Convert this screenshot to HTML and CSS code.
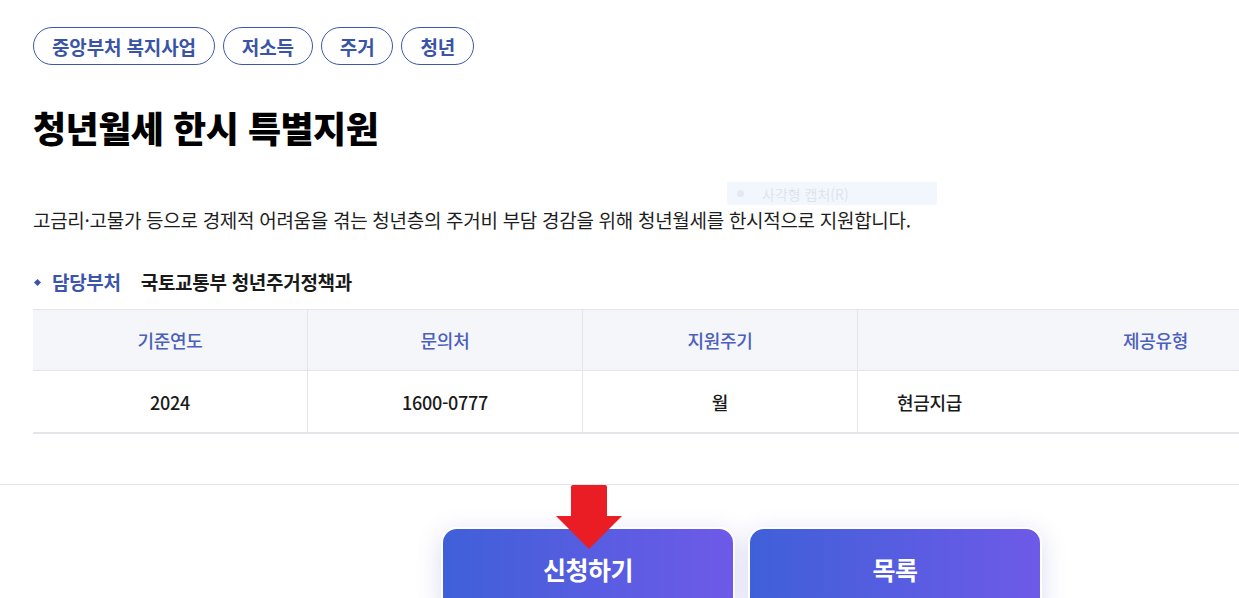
FILE: index.html
```html
<!DOCTYPE html>
<html lang="ko">
<head>
<meta charset="utf-8">
<title>청년월세 한시 특별지원</title>
<link rel="stylesheet" href="styles.css">
</head>
<body>
<div class="page">
  <div class="content">
    <ul class="tags">
      <li class="tag">중앙부처 복지사업</li>
      <li class="tag">저소득</li>
      <li class="tag">주거</li>
      <li class="tag">청년</li>
    </ul>
    <h1 class="title">청년월세 한시 특별지원</h1>
    <p class="desc">고금리·고물가 등으로 경제적 어려움을 겪는 청년층의 주거비 부담 경감을 위해 청년월세를 한시적으로 지원합니다.</p>
    <div class="dept">
      <span class="dept-label">담당부처</span>
      <span class="dept-value">국토교통부 청년주거정책과</span>
    </div>
    <div class="info-table">
      <div class="th">기준연도</div>
      <div class="th">문의처</div>
      <div class="th">지원주기</div>
      <div class="th">제공유형</div>
      <div class="td">2024</div>
      <div class="td">1600-0777</div>
      <div class="td">월</div>
      <div class="td td-left">현금지급</div>
    </div>
  </div>
  <div class="divider"></div>
  <div class="actions">
    <div class="btn-wrap">
      <button class="btn">신청하기</button>
      <div class="arrow">
        <div class="arrow-shaft"></div>
        <div class="arrow-head"></div>
      </div>
    </div>
    <div class="btn-wrap">
      <button class="btn">목록</button>
    </div>
  </div>
  <div class="capture-tip"><span class="dot"></span>사각형 캡처(R)</div>
</div>
</body>
</html>
```

FILE: styles.css
```css
* { box-sizing: border-box; }
html, body {
  margin: 0;
  padding: 0;
  background: #fff;
  overflow: hidden;
}
body {
  font-family: "Noto Sans CJK KR", "Noto Sans", sans-serif;
  color: #111;
}
.page {
  position: relative;
  width: 1486px;
}
.content {
  padding: 27px 0 0 33px;
  width: 1453px;
}
.tags {
  list-style: none;
  margin: 0;
  padding: 0;
  display: flex;
  gap: 8px;
}
.tag {
  height: 38px;
  padding: 0 18px;
  border: 1px solid #3d58aa;
  border-radius: 20px;
  color: #3a54a6;
  font-size: 19px;
  font-weight: 700;
  display: flex;
  align-items: center;
  letter-spacing: -0.15px;
}
.title {
  margin: 35px 0 0;
  font-size: 36px;
  font-weight: 900;
  line-height: 54px;
  letter-spacing: -0.5px;
  color: #000;
}
.desc {
  margin: 53px 0 0;
  font-size: 19px;
  line-height: 26px;
  color: #1e1e1e;
  letter-spacing: -0.3px;
}
.dept {
  margin-top: 36px;
  display: flex;
  align-items: center;
  font-size: 19px;
  line-height: 26px;
  font-weight: 700;
  letter-spacing: -0.3px;
}
.dept-label {
  position: relative;
  padding-left: 19px;
  color: #3b55ad;
  font-weight: 600;
  margin-right: 20px;
}
.dept-label::before {
  content: "";
  position: absolute;
  left: 2px;
  top: 11px;
  width: 5px;
  height: 5px;
  background: #3b55ad;
  transform: rotate(45deg);
}
.dept-value { color: #1a1a1a; }
.info-table {
  margin-top: 14px;
  display: grid;
  grid-template-columns: 274px 275px 275px 1fr;
  border-top: 1px solid #e3e5ea;
  border-bottom: 2px solid #e5e6ea;
}
.th, .td {
  display: flex;
  align-items: center;
  justify-content: center;
  font-size: 18px;
  letter-spacing: -0.3px;
}
.th {
  height: 61px;
  background: #f5f6fa;
  color: #4b5fbd;
  font-weight: 500;
  border-bottom: 1px solid #e3e5ea;
}
.td {
  height: 61px;
  color: #1a1a1a;
  font-weight: 500;
}
.th + .th, .td + .td { border-left: 1px solid #e3e5ea; }
.td-left { justify-content: flex-start; padding-left: 39px; }
.divider {
  margin-top: 50px;
  height: 1px;
  background: #e4e5e9;
  width: 100%;
}
.actions {
  display: flex;
  justify-content: center;
  gap: 13px;
  padding: 42px 0 0 33px;
  width: 1450px;
}
.btn-wrap { position: relative; }
.btn {
  width: 294px;
  height: 90px;
  border: 2px solid #fff;
  border-radius: 16px;
  background: linear-gradient(90deg, #3f60d8 0%, #6e5ae8 100%);
  color: #fff;
  font-family: inherit;
  font-size: 25px;
  font-weight: 700;
  padding: 0 0 6px;
  box-shadow: 0 6px 24px rgba(90, 90, 200, 0.22);
  letter-spacing: -0.5px;
}
.arrow {
  position: absolute;
  left: 115px;
  top: -42px;
  width: 66px;
  display: flex;
  flex-direction: column;
  align-items: center;
}
.arrow-shaft {
  width: 36px;
  height: 31px;
  background: #ea1c24;
  border-radius: 2px 2px 0 0;
}
.arrow-head {
  width: 0;
  height: 0;
  border-left: 33px solid transparent;
  border-right: 33px solid transparent;
  border-top: 33px solid #ea1c24;
}
.capture-tip {
  position: absolute;
  left: 727px;
  top: 182px;
  width: 210px;
  height: 23px;
  background: #f2f7fd;
  color: #dfe4ec;
  font-size: 14px;
  display: flex;
  align-items: center;
  padding-left: 10px;
  gap: 18px;
}
.capture-tip .dot {
  width: 7px;
  height: 7px;
  border-radius: 50%;
  background: #e3e8f2;
}
```
